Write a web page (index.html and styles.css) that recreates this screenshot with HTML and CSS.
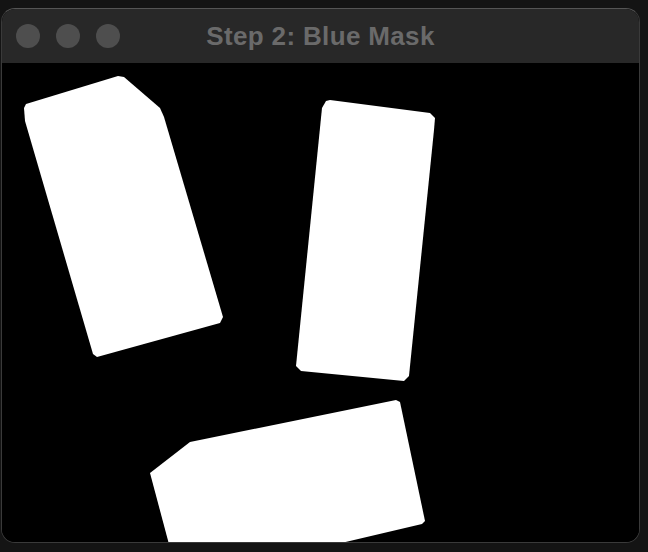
FILE: index.html
```html
<!DOCTYPE html>
<html lang="en">
<head>
<meta charset="utf-8">
<title>Step 2: Blue Mask</title>
<link rel="stylesheet" href="styles.css">
</head>
<body>
<div class="window">
  <div class="titlebar">
    <div class="lights">
      <span class="light"></span>
      <span class="light"></span>
      <span class="light"></span>
    </div>
    <div class="title">Step 2: Blue Mask</div>
    <div class="spacer"></div>
  </div>
  <div class="content">
    <svg class="mask" viewBox="2 63 637 479" preserveAspectRatio="none" xmlns="http://www.w3.org/2000/svg">
      <polygon fill="#fff" points="26,104 118,76 124,77 160,108 164,117 223,317 220,323 97,357 93,354 25,121 24,108"/>
      <polygon fill="#fff" points="330,100 430,113 435,118 434,130 409,376 404,381 301,371 296,366 322,108 326,101"/>
      <polygon fill="#fff" points="150,473 190,442 396,400 400,402 425,521 422,524 320,548 170,548"/>
    </svg>
  </div>
</div>
</body>
</html>
```

FILE: styles.css
```css
html, body {
  margin: 0;
  padding: 0;
  background: #141414;
}

body {
  width: 648px;
  height: 552px;
  overflow: hidden;
  font-family: "Liberation Sans", Arial, sans-serif;
}

.window {
  box-sizing: border-box;
  margin: 8px 0 0 1px;
  width: 639px;
  height: 535px;
  border: 1px solid #3a3a3a;
  border-top-color: #555555;
  border-radius: 14px;
  overflow: hidden;
  background: #000;
  display: flex;
  flex-direction: column;
}

.titlebar {
  height: 54px;
  flex: none;
  background: #282828;
  display: grid;
  grid-template-columns: 1fr auto 1fr;
  align-items: center;
}

.lights {
  display: flex;
  gap: 16px;
  padding-left: 14px;
}

.light {
  width: 24px;
  height: 24px;
  border-radius: 50%;
  background: #4e4e4e;
}

.title {
  color: #6a6a6a;
  font-weight: bold;
  font-size: 26px;
  letter-spacing: 0.35px;
  white-space: nowrap;
}

.content {
  flex: 1;
  background: #000;
}

.mask {
  display: block;
  width: 100%;
  height: 100%;
}
```
